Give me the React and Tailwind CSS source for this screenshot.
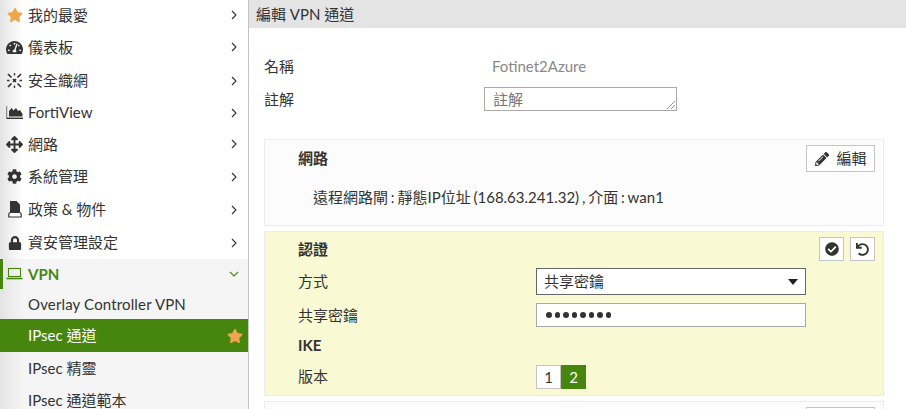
import { FaStar, FaTachometerAlt, FaArrowsAlt, FaCog, FaLock, FaPencilAlt, FaCheckCircle, FaUndo } from 'react-icons/fa';

const FabricIcon = () => (
  <svg viewBox="0 0 17 17" className="w-[17px] h-[17px]" fill="none" stroke="currentColor" strokeWidth="1.700">
    <path d="M2 2l3.500 3.500M7 7l3 3M11.500 11.500l3.500 3.500" />
    <path d="M15 2l-3.500 3.500M10 7l-3 3M5.500 11.500L2 15" />
    <path d="M1 8.500h2.500M13.500 8.500H16M8.500 1v2.500M8.500 13.500V16" strokeWidth="1.300" />
  </svg>
);

const ViewIcon = () => (
  <svg viewBox="0 0 17 13" className="w-[17px] h-[13px]">
    <path d="M0.600 0v13" stroke="#888" strokeWidth="1.200" />
    <path d="M3 10.500V5l2.500-3 2 2.500L10 2l2 3 2-1 2.500 4v2.500z" fill="currentColor" />
    <path d="M1 12.300h16" stroke="currentColor" strokeWidth="1.400" />
  </svg>
);

const PolicyIcon = () => (
  <svg viewBox="0 0 14 17" className="w-[14px] h-[17px]" fill="currentColor">
    <path d="M2 0h6.500L12 3.500V11H2z" />
    <path d="M0.800 16v-2.500q0-2 2-2h8.400q2 0 2 2V16z" fill="#ffffff" stroke="currentColor" strokeWidth="1.200" />
  </svg>
);

const LaptopIcon = () => (
  <svg viewBox="0 0 17 14" className="w-[17px] h-[14px]" fill="none" stroke="currentColor" strokeWidth="1.100">
    <rect x="2.500" y="1.500" width="12" height="8" />
    <path d="M0.500 11.500h16" strokeWidth="1.600" />
  </svg>
);

const Chevron = ({ down }) => (
  <svg viewBox="0 0 10 10" className="w-[10px] h-[10px]" fill="none" stroke="currentColor" strokeWidth="1.100">
    <path d={down ? 'M1 3l4 4 4-4' : 'M3 1l4 4-4 4'} />
  </svg>
);

const menu = [
  { label: '我的最愛', icon: <FaStar className="text-[#f0a64e] text-[16px]" />, height: 'h-[30px]' },
  { label: '儀表板', icon: <FaTachometerAlt className="text-[17px]" />, height: 'h-[34px]' },
  { label: '安全織網', icon: <FabricIcon />, height: 'h-[33px]' },
  { label: 'FortiView', icon: <ViewIcon />, height: 'h-[31px]' },
  { label: '網路', icon: <FaArrowsAlt className="text-[17px]" />, height: 'h-[32px]' },
  { label: '系統管理', icon: <FaCog className="text-[15px]" />, height: 'h-[33px]' },
  { label: '政策 & 物件', icon: <PolicyIcon />, height: 'h-[33px]' },
  { label: '資安管理設定', icon: <FaLock className="text-[14px]" />, height: 'h-[33px]' },
];

const Sidebar = () => (
  <div className="w-[249px] shrink-0 border-r border-[#c4c4c4] bg-[linear-gradient(90deg,#e4e4e4,#ffffff_24px)] text-[15px] text-[#333]">
    {menu.map(item => (
      <div key={item.label} className={`flex items-center pl-[6px] pr-[9px] ${item.height}`}>
        <span className="w-[17px] flex justify-center">{item.icon}</span>
        <span className="ml-[5px] flex-1">{item.label}</span>
        <Chevron />
      </div>
    ))}
    <div className="bg-[linear-gradient(90deg,#e4e4e4,#f5f5f5_24px)] h-[150px] overflow-hidden">
      <div className="relative flex items-center h-[30px] pl-[6px] pr-[9px] text-[#46860f] font-bold">
        <span className="absolute left-0 top-0 w-[3px] h-[30px] bg-[#46860f]" />
        <span className="w-[17px] flex justify-center"><LaptopIcon /></span>
        <span className="ml-[5px] flex-1">VPN</span>
        <Chevron down />
      </div>
      <div className="flex items-center h-[30px] pl-[28px] tracking-[0.15px]">Overlay Controller VPN</div>
      <div className="flex items-center h-[33px] pl-[28px] pr-[5px] bg-[#46860f] text-white">
        <span className="flex-1">IPsec 通道</span>
        <FaStar className="text-[#f0a64e] text-[16px]" />
      </div>
      <div className="flex items-center h-[32px] pl-[28px]">IPsec 精靈</div>
      <div className="flex items-center h-[25px] pl-[28px] pt-[7px]">IPsec 通道範本</div>
    </div>
  </div>
);

const Main = () => (
  <div className="flex-1 min-w-0 text-[15px] text-[#333]">
    <div className="h-[28px] bg-[#e4e4e4] flex items-center pl-[7px]">編輯 VPN 通道</div>

    <div className="pl-[15px] pr-[22px]">
      <div className="flex items-center h-[24px] mt-[26px]">
        <span className="w-[228px] mt-[1px]">名稱</span>
        <span className="text-[#888]">Fotinet2Azure</span>
      </div>
      <div className="flex items-center h-[24px] mt-[9px]">
        <span className="w-[220px] mt-[1px]">註解</span>
        <div className="relative w-[193px] h-[24px] border border-[#a9a9a9] pl-[8px] flex items-center text-[#777]">
          註解
          <svg viewBox="0 0 8 8" className="absolute right-[1px] bottom-[1px] w-[8px] h-[8px]" stroke="#777" strokeWidth="0.800">
            <path d="M0 8l8-8M4 8l4-4" />
          </svg>
        </div>
      </div>

      <div className="mt-[28px] h-[87px] border border-[#ececec] bg-[#fcfcfc] flex flex-col">
        <div className="flex items-start pl-[33px] pr-[8px] pt-[5px]">
          <span className="flex-1 font-bold mt-[2px]">網路</span>
          <button className="w-[69px] h-[27px] border border-[#c4c4c4] bg-white flex items-center justify-center gap-[7px] pl-[1px]">
            <FaPencilAlt className="text-[14px]" />
            編輯
          </button>
        </div>
        <div className="pl-[48px] mt-[14px] [word-spacing:-1px]">遠程網路閘 : 靜態IP位址 (168.63.241.32) , 介面 : wan1</div>
      </div>

      <div className="mt-[5px] h-[165px] border border-[#ececec] bg-[#f9f9d3] pl-[33px] pr-[8px]">
        <div className="flex items-start pt-[5px] h-[36px]">
          <span className="flex-1 font-bold mt-[1px]">認證</span>
          <button className="w-[25px] h-[24px] border border-[#c4c4c4] bg-white flex items-center justify-center">
            <FaCheckCircle className="text-[14px]" />
          </button>
          <button className="w-[25px] h-[24px] ml-[6px] border border-[#c4c4c4] bg-white flex items-center justify-center">
            <FaUndo className="text-[13px]" />
          </button>
        </div>
        <div className="flex items-center h-[27px]">
          <span className="w-[238px]">方式</span>
          <div className="flex-1 h-[27px] mr-[69px] border border-[#666] bg-white flex items-center justify-between pl-[7px] pr-[6px]">
            共享密鑰
            <svg viewBox="0 0 10 6" className="w-[10px] h-[6px] mr-[1px]" fill="#222"><path d="M0 0h10L5 6z" /></svg>
          </div>
        </div>
        <div className="flex items-center h-[24px] mt-[8px]">
          <span className="w-[238px]">共享密鑰</span>
          <div className="flex-1 h-[24px] mr-[69px] border border-[#a9a9a9] bg-white flex items-center pl-[9px] gap-[3px]">
            {[0, 1, 2, 3, 4, 5, 6, 7].map(i => <span key={i} className="w-[5.500px] h-[5.500px] rounded-full bg-[#333]" />)}
          </div>
        </div>
        <div className="font-bold h-[20px] mt-[8px] flex items-center">IKE</div>
        <div className="flex items-center h-[24px] mt-[10px]">
          <span className="w-[238px] -mt-[2px]">版本</span>
          <div className="flex">
            <span className="w-[25px] h-[24px] border border-[#c4c4c4] bg-white flex items-center justify-center">1</span>
            <span className="w-[25px] h-[24px] bg-[#46860f] text-white flex items-center justify-center">2</span>
          </div>
        </div>
      </div>

      <div className="mt-[5px] h-[40px] border border-[#ececec] bg-[#fcfcfc] flex justify-end pr-[8px] pt-[5px]">
        <div className="w-[69px] h-[27px] border border-[#c4c4c4] bg-white" />
      </div>
    </div>
  </div>
);

export default function App() {
  return (
    <div className="flex h-[409px] w-[906px] overflow-hidden bg-white font-['Lato','Noto_Sans_CJK_TC',sans-serif]">
      <Sidebar />
      <Main />
    </div>
  );
}
